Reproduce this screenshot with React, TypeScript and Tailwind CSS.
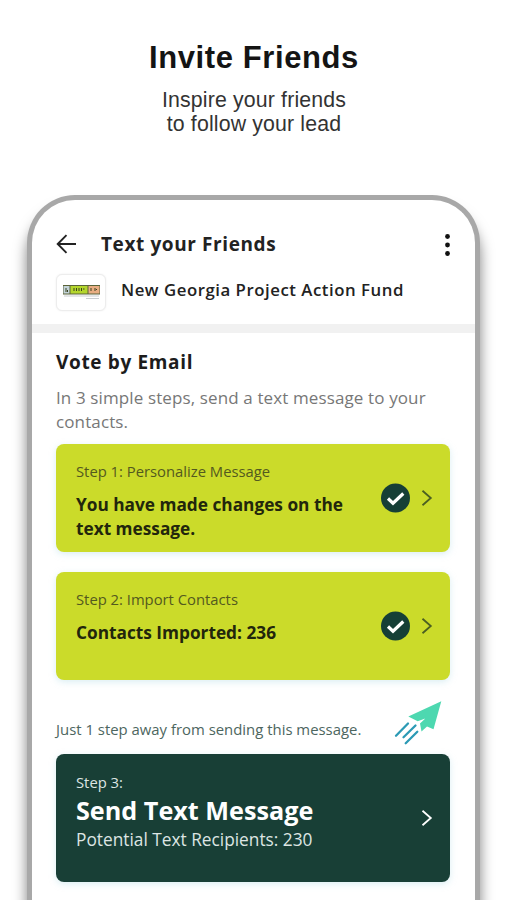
import clsx from "clsx";

const Chevron = ({ className }: { className?: string }) => (
  <svg viewBox="0 0 12 18" fill="none" stroke="currentColor" strokeWidth="1.8" className={clsx("h-[18px] w-3", className)}>
    <path d="M1.500 1.800 9.800 9 1.500 16.200" />
  </svg>
);

const CheckBadge = () => (
  <svg viewBox="0 0 30 30" fill="none" className="size-[30px]">
    <circle cx="15.500" cy="15" r="14.500" fill="#163f36" />
    <path d="m8 15.500 5 4.700L23.300 10.500" stroke="#fff" strokeWidth="3.200" />
  </svg>
);

const PaperPlane = () => (
  <svg viewBox="0 0 50 46" fill="none" className="h-[46px] w-[50px]">
    <path d="M48.300 1.300 15.300 16.500l9.400 4.700 7.600-2.700-5.300 5 1.500 8 5.500-5 6.500 2.700Z" fill="#4dd8b0" />
    <path d="M15 23.500 3 35.700M22.500 25.500 10.500 37.300M24.300 31.800 12.700 43.300" stroke="#2c9ab5" strokeWidth="2.300" strokeLinecap="round" />
  </svg>
);

const OrgLogo = () => (
  <div className="flex h-[37px] w-[50px] flex-col items-center rounded-md border border-[#ededed] bg-white pt-[10px] shadow-[0_0_2px_rgba(0,0,0,0.08)]">
    <svg viewBox="0 0 37 15" className="h-[15px] w-[37px]">
      <rect width="37" height="9.500" fill="#5a6338" />
      <rect x="0.500" y="1" width="6" height="7.500" fill="#c3d3d8" />
      <rect x="7.500" y="1" width="17" height="7.500" fill="#b4d62c" />
      <rect x="25.500" y="1" width="11" height="7.500" fill="#e8ad82" />
      <path d="M3 3v4M4.500 5v2M11 3v3M13.500 3v3M16 3v3M18.500 3v3M20 4h1.500M28 3v3M32 3v3M33 4.500h1" stroke="#3b421f" strokeWidth="1" />
      <path d="M1 11h35M23 13.500h13" stroke="#c9cdd0" strokeWidth="1" />
    </svg>
  </div>
);

const StepCard = ({ label, text }: { label: string; text: string }) => (
  <div className="flex h-[108px] items-center rounded-lg bg-[#cbdb2a] pr-[17px] pl-5 shadow-[0_2px_7px_rgba(150,205,220,0.35)]">
    <div className="flex h-full flex-1 flex-col pt-[15px]">
      <p className="text-[14.8px] leading-6 text-[#53591f]">{label}</p>
      <p className="mt-[10px] w-[280px] text-[17.25px] leading-6 font-bold text-[#22260c]">{text}</p>
    </div>
    <div className="flex items-center gap-[11px]">
      <CheckBadge />
      <Chevron className="text-[#4b5f22]" />
    </div>
  </div>
);

export default function App() {
  return (
    <div className="flex h-[900px] w-[506px] flex-col overflow-hidden bg-white">
      <header className="flex h-[195px] shrink-0 flex-col items-center pt-[39px] pl-0.5 font-['Liberation_Sans',sans-serif]">
        <h1 className="text-[31px] leading-[38px] font-bold tracking-[0.6px] text-[#141414]">Invite Friends</h1>
        <p className="mt-[11px] text-center text-[21.3px] leading-6 tracking-[0.15px] text-[#333]">
          Inspire your friends
          <br />
          to follow your lead
        </p>
      </header>

      <main className="ml-[27px] h-[800px] w-[453px] shrink-0 rounded-t-[48px] border-[5px] border-b-0 border-[#a8a8a8] bg-white font-['Open_Sans',sans-serif] shadow-[0_14px_14px_rgba(0,0,0,0.5)]">
        <div className="flex h-[124px] flex-col pt-7 pr-6 pl-6">
          <div className="flex h-8 items-center">
            <svg viewBox="0 0 20 20" fill="none" stroke="#222" strokeWidth="1.9" className="size-5">
              <path d="M20 10H2M10.500 1.200 1.700 10l8.800 8.800" />
            </svg>
            <h2 className="ml-[25px] flex-1 text-[19px] font-bold tracking-[0.600px] text-[#222]">Text your Friends</h2>
            <svg viewBox="0 0 6 22" fill="#111" className="mt-[2px] h-[22px] w-[6px]">
              <circle cx="2.500" cy="2.500" r="2.400" />
              <circle cx="2.500" cy="11" r="2.400" />
              <circle cx="2.500" cy="19.500" r="2.400" />
            </svg>
          </div>
          <div className="mt-[14px] flex">
            <OrgLogo />
            <p className="ml-[15px] text-[16.8px] leading-8 font-semibold tracking-[0.53px] text-[#222]">New Georgia Project Action Fund</p>
          </div>
        </div>
        <div className="h-[9px] bg-[#f1f1f1]" />

        <div className="flex flex-col pt-[17px] pr-[25px] pl-6">
          <h3 className="text-[19px] leading-6 font-bold tracking-[0.650px] text-[#1c1c1c]">Vote by Email</h3>
          <p className="mt-[11.5px] mb-[10px] text-[17px] leading-6 tracking-[0.12px] whitespace-nowrap text-[#777]">
            In 3 simple steps, send a text message to your
            <br />
            contacts.
          </p>

          <div className="flex flex-col gap-5">
            <StepCard label="Step 1: Personalize Message" text="You have made changes on the text message." />
            <StepCard label="Step 2: Import Contacts" text="Contacts Imported: 236" />
          </div>

          <div className="flex h-[74.5px] items-start pt-[20.5px] pr-[7px]">
            <p className="flex-1 pt-[16.5px] text-[14.9px] leading-6 text-[#4d6660]">Just 1 step away from sending this message.</p>
            <PaperPlane />
          </div>

          <div className="flex h-32 items-center rounded-lg bg-[#183f36] pr-[17px] pl-5 text-white shadow-[0_2px_7px_rgba(150,205,220,0.35)]">
            <div className="flex h-full flex-1 flex-col pt-4">
              <p className="text-[14.8px] leading-6 text-[#dde5e3]">Step 3:</p>
              <p className="text-[25.2px] leading-8 font-bold">Send Text Message</p>
              <p className="mt-[2px] text-[17.3px] leading-6 text-[#dde5e3]">Potential Text Recipients: 230</p>
            </div>
            <Chevron />
          </div>
        </div>
      </main>
    </div>
  );
}
